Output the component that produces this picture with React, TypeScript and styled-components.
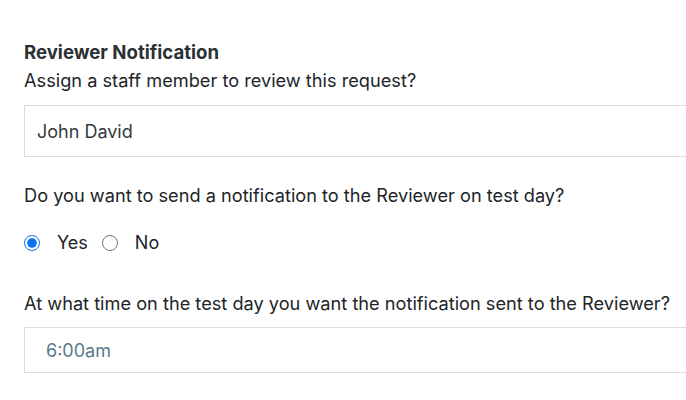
import styled, { createGlobalStyle } from "styled-components";

const GlobalStyle = createGlobalStyle`
  html, body {
    margin: 0;
    padding: 0;
    background: #ffffff;
    overflow: hidden;
  }
  body {
    font-family: Inter, "Noto Sans", sans-serif;
    color: #212529;
  }
`;

export default function App() {
  return (
    <>
      <GlobalStyle />
      <Form>
        <Title>Reviewer Notification</Title>
        <Question>Assign a staff member to review this request?</Question>
        <TextBox value="John David" readOnly />

        <Question $top={26}>
          Do you want to send a notification to the Reviewer on test day?
        </Question>
        <RadioRow>
          <RadioLabel>
            <Radio type="radio" name="notify" defaultChecked />
            Yes
          </RadioLabel>
          <RadioLabel>
            <Radio type="radio" name="notify" />
            No
          </RadioLabel>
        </RadioRow>

        <Question $top={36}>
          At what time on the test day you want the notification sent to the
          Reviewer?
        </Question>
        <TimeBox value="6:00am" readOnly />
      </Form>
    </>
  );
}

const Form = styled.div`
  display: flex;
  flex-direction: column;
  width: 740px;
  padding: 40px 0 0 24px;
`;

const Title = styled.h3`
  margin: 0 0 4px;
  font-size: 18.6px;
  font-weight: 700;
  line-height: 24px;
  color: #2b3035;
`;

const Question = styled.p<{ $top?: number }>`
  margin: ${(p) => p.$top ?? 0}px 0 12px;
  font-size: 18.2px;
  line-height: 24px;
  white-space: nowrap;
`;

const TextBox = styled.input`
  box-sizing: border-box;
  width: 100%;
  height: 52px;
  margin-top: 1px;
  padding: 0 12px;
  border: 1px solid #dcdcdc;
  border-radius: 0;
  font-family: inherit;
  font-size: 18px;
  color: #343a40;
  outline: none;
`;

const TimeBox = styled(TextBox)`
  height: 46px;
  margin-top: 0;
  padding: 0 21px;
  color: #587b8a;
`;

const RadioRow = styled.div`
  display: flex;
  align-items: center;
  gap: 14px;
  height: 24px;
  margin-top: 12px;
`;

const RadioLabel = styled.label`
  display: flex;
  align-items: center;
  gap: 17px;
  font-size: 18px;
  line-height: 24px;
`;

const Radio = styled.input`
  margin: 0;
  width: 16px;
  height: 16px;
  accent-color: #0a72f0;
`;
